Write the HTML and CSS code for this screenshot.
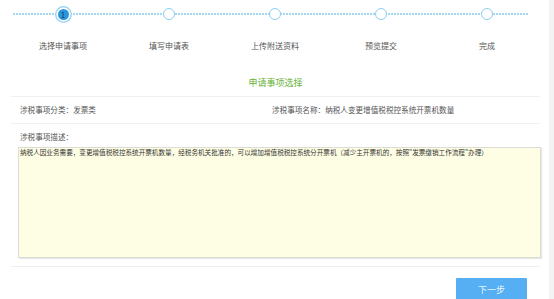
FILE: index.html
```html
<!DOCTYPE html>
<html lang="zh-CN">
<head>
    <meta charset="UTF-8">
    <meta name="viewport" content="width=device-width, initial-scale=1.0">
    <title>申请事项选择</title>
    <link rel="stylesheet" href="styles.css">
</head>
<body>

<div class="page">
    <div class="steps">
        <div class="step active">
            <span class="dot">1</span>
            <span class="step-name">选择申请事项</span>
        </div>
        <div class="step">
            <span class="dot"></span>
            <span class="step-name">填写申请表</span>
        </div>
        <div class="step">
            <span class="dot"></span>
            <span class="step-name">上传附送资料</span>
        </div>
        <div class="step">
            <span class="dot"></span>
            <span class="step-name">预览提交</span>
        </div>
        <div class="step">
            <span class="dot"></span>
            <span class="step-name">完成</span>
        </div>
    </div>

    <div class="form">
        <h2 class="form-title">申请事项选择</h2>
        <div class="form-row">
            <div class="form-col first">涉税事项分类：发票类</div>
            <div class="form-col">涉税事项名称：纳税人变更增值税税控系统开票机数量</div>
        </div>
        <div class="form-desc">
            <div class="desc-label">涉税事项描述：</div>
            <div class="desc-box">纳税人因业务需要，变更增值税税控系统开票机数量，经税务机关批准的，可以增加增值税税控系统分开票机（减少主开票机的，按照"发票缴销工作流程"办理）</div>
        </div>
        <div class="form-actions">
            <button class="next-button">下一步</button>
        </div>
    </div>
</div>

</body>
</html>
```

FILE: styles.css
```css
body {
    margin: 0;
    font-family: "Noto Sans CJK SC", "Noto Sans", sans-serif;
    background-color: #f3f3f3;
    color: #555;
    overflow: hidden;
}
.page {
    width: 549px;
    height: 299px;
    background-color: #fff;
}
.steps {
    display: flex;
    margin-left: 10px;
    width: 530px;
    padding-top: 8px;
    background: repeating-linear-gradient(90deg, #a3d8f3 0 2px, transparent 2px 3px) 3px 13px / 516px 2px no-repeat;
}
.step {
    width: 106px;
    display: flex;
    flex-direction: column;
    align-items: center;
}
.dot {
    box-sizing: border-box;
    width: 12px;
    height: 12px;
    border-radius: 50%;
    border: 1.5px solid #8ccff2;
    background-color: #fff;
    font-size: 8px;
    line-height: 9px;
    text-align: center;
    color: #163a55;
}
.step.active .dot {
    width: 11px;
    height: 11px;
    margin-top: 0.5px;
    border: none;
    background-color: #2a96dc;
    box-shadow: 0 0 0 1.5px #fff, 0 0 0 3px #9fd6f4;
    line-height: 11px;
}
.step-name {
    margin-top: 20px;
    font-size: 8px;
    line-height: 12px;
    white-space: nowrap;
}
.step.active .step-name {
    margin-top: 20.5px;
}
.form {
    margin: 0 9px 0 11px;
}
.form-title {
    margin: 25px 0 0;
    padding-bottom: 7px;
    font-size: 9px;
    line-height: 12px;
    font-weight: normal;
    text-align: center;
    color: #66b234;
    border-bottom: 1px solid #f0f0f0;
}
.form-row {
    display: flex;
    padding-left: 9px;
    font-size: 7.6px;
    line-height: 26px;
    border-bottom: 1px solid #f0f0f0;
}
.form-col.first {
    width: 252px;
}
.form-desc {
    padding: 7px 0 8px;
    border-bottom: 1px solid #f0f0f0;
}
.desc-label {
    padding-left: 9px;
    font-size: 7.6px;
    line-height: 12px;
}
.desc-box {
    box-sizing: border-box;
    margin: 4px -1px 0 7px;
    height: 111px;
    padding: 0 1px;
    background-color: #fefee4;
    border: 1px solid #dcdcd4;
    box-shadow: 1px 1px 1px #e8e8e8;
    font-size: 6.6px;
    line-height: 8px;
    color: #333;
}
.form-actions {
    display: flex;
    justify-content: flex-end;
    padding: 11px 13px 0 0;
}
.next-button {
    width: 71px;
    height: 24px;
    border: none;
    border-radius: 1px;
    background-color: #56aef3;
    color: #e4f2fe;
    font-family: inherit;
    font-size: 9px;
    padding: 0 0 2px;
}
```
